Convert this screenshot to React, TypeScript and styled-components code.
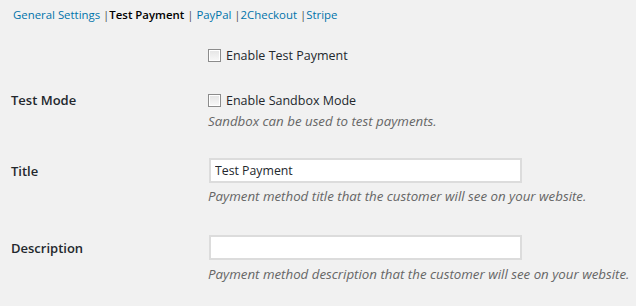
import styled, { createGlobalStyle } from "styled-components"

const Global = createGlobalStyle`
    html, body {
        margin: 0;
        padding: 0;
        background: #f1f1f1;
        font-family: "Open Sans", "Noto Sans", sans-serif;
        color: #23282d;
    }
`

const Page = styled.div`
    width: 636px;
    height: 306px;
    overflow: hidden;
`

const Nav = styled.div`
    display: flex;
    align-items: center;
    height: 28px;
    padding-left: 13px;
    font-size: 11.4px;
    white-space: pre;
`

const NavLink = styled.a<{ $current?: boolean }>`
    color: ${(p) => (p.$current ? "#000" : "#0073aa")};
    font-weight: ${(p) => (p.$current ? 600 : 400)};
    text-decoration: none;
`

const Sep = styled.span`
    color: #555;
`

const Form = styled.div`
    display: flex;
    flex-direction: column;
`

const Row = styled.div<{ $space: number }>`
    display: grid;
    grid-template-columns: 208px 1fr;
    margin-top: ${(p) => p.$space}px;
`

const Label = styled.div<{ $h: number }>`
    padding-left: 11px;
    height: ${(p) => p.$h}px;
    display: flex;
    align-items: center;
    font-size: 13px;
    font-weight: 600;
    color: #23282d;
`

const Field = styled.div`
    display: flex;
    flex-direction: column;
`

const CheckLine = styled.label`
    display: flex;
    align-items: center;
    height: 20px;
    font-size: 12.5px;
    gap: 5px;
`

const Box = styled.span`
    width: 11px;
    height: 11px;
    border: 1px solid #8c8c8c;
    background: linear-gradient(#e4e4e4, #f8f8f8);
    box-shadow: inset 0 0 0 1px #fff;
`

const Input = styled.input`
    box-sizing: border-box;
    width: 313px;
    height: 25px;
    margin: 0 0 0 1px;
    padding: 0 4px;
    border: 2px solid #dcdcdc;
    background: #fff;
    font-family: inherit;
    font-size: 12.3px;
    color: #23282d;
    outline: none;
`

const Desc = styled.p<{ $top: number }>`
    margin: ${(p) => p.$top}px 0 0;
    height: 18px;
    line-height: 18px;
    font-size: 13.3px;
    font-style: italic;
    color: #666;
`

const tabs = ["General Settings ", "Test Payment ", " PayPal ", "2Checkout ", "Stripe"]

export default function App() {
    return (
        <Page>
            <Global />
            <Nav>
                {tabs.map((t, i) => (
                    <span key={t}>
                        {i > 0 && <Sep>|</Sep>}
                        <NavLink $current={i === 1}>{t}</NavLink>
                    </span>
                ))}
            </Nav>
            <Form>
                <Row $space={17}>
                    <Label $h={20} />
                    <Field>
                        <CheckLine><Box />Enable Test Payment</CheckLine>
                    </Field>
                </Row>
                <Row $space={25}>
                    <Label $h={20}>Test Mode</Label>
                    <Field>
                        <CheckLine><Box />Enable Sandbox Mode</CheckLine>
                        <Desc $top={2}>Sandbox can be used to test payments.</Desc>
                    </Field>
                </Row>
                <Row $space={28}>
                    <Label $h={25}>Title</Label>
                    <Field>
                        <Input defaultValue="Test Payment" />
                        <Desc $top={4}>Payment method title that the customer will see on your website.</Desc>
                    </Field>
                </Row>
                <Row $space={30}>
                    <Label $h={25}>Description</Label>
                    <Field>
                        <Input defaultValue="" />
                        <Desc $top={5}>Payment method description that the customer will see on your website.</Desc>
                    </Field>
                </Row>
            </Form>
        </Page>
    )
}
